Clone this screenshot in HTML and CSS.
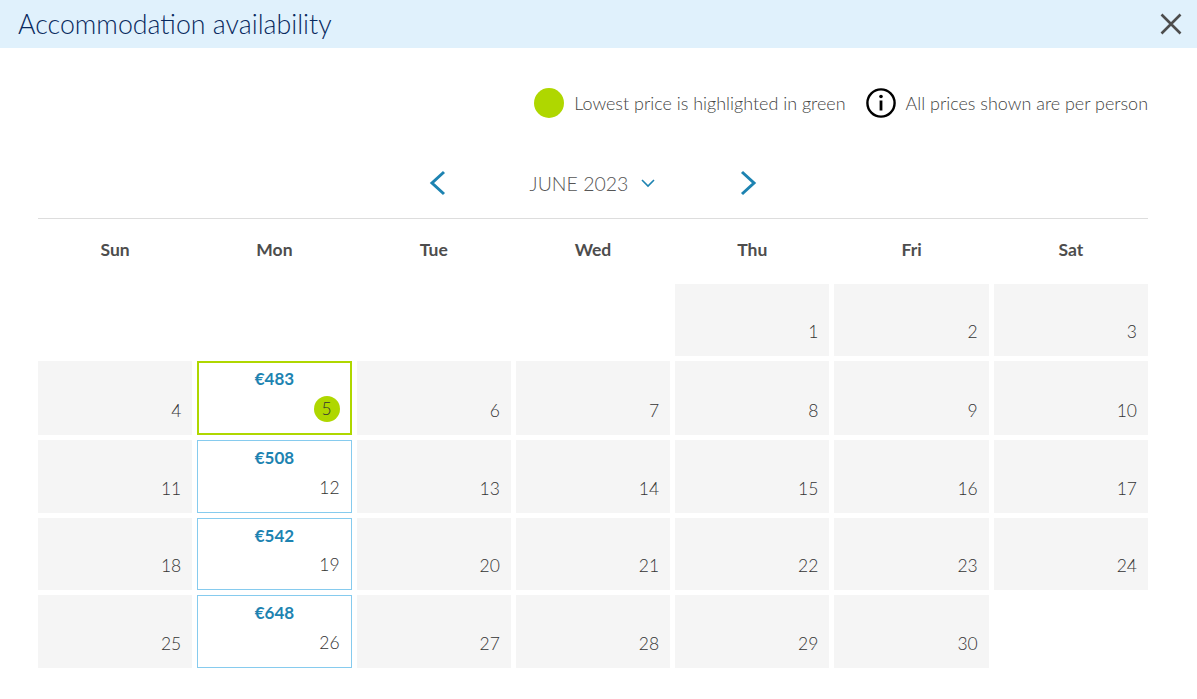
FILE: index.html
```html
<!DOCTYPE html>
<html lang="en">
<head>
<meta charset="utf-8">
<title>Accommodation availability</title>
<link rel="stylesheet" href="styles.css">
</head>
<body>
<header class="head">
  <h1 class="title">Accommodation availability</h1>
  <svg class="close" width="24" height="24" viewBox="0 0 24 24"><path d="M2.500 2.500L21.500 21.500M21.500 2.500L2.500 21.500" fill="none" stroke="#4d4d4d" stroke-width="2.600"/></svg>
</header>
<main class="body">
  <div class="legend">
    <span class="dot"></span>
    <span class="legend-text">Lowest price is highlighted in green</span>
    <svg class="info" width="30" height="30" viewBox="0 0 30 30"><circle cx="15" cy="15" r="13.600" fill="none" stroke="#000" stroke-width="2.400"/><circle cx="15" cy="8.500" r="1.800" fill="#000"/><path d="M15 12.500V22.500" fill="none" stroke="#000" stroke-width="2.800"/></svg>
    <span class="legend-text">All prices shown are per person</span>
  </div>
  <div class="month-nav">
    <svg class="arrow" width="18" height="26" viewBox="0 0 18 26"><path d="M15 2L3 13L15 24" fill="none" stroke="#1d83b1" stroke-width="3"/></svg>
    <div class="month"><span>JUNE 2023</span>
      <svg width="16" height="10" viewBox="0 0 16 10"><path d="M2 2L8 8L14 2" fill="none" stroke="#1d83b1" stroke-width="1.600"/></svg>
    </div>
    <svg class="arrow" width="18" height="26" viewBox="0 0 18 26"><path d="M3 2L15 13L3 24" fill="none" stroke="#1d83b1" stroke-width="3"/></svg>
  </div>
  <div class="weekdays">
    <div>Sun</div><div>Mon</div><div>Tue</div><div>Wed</div><div>Thu</div><div>Fri</div><div>Sat</div>
  </div>
  <div class="grid">
    <div></div><div></div><div></div><div></div>
    <div class="cell"><span class="num">1</span></div>
    <div class="cell"><span class="num">2</span></div>
    <div class="cell"><span class="num">3</span></div>
    <div class="cell"><span class="num">4</span></div>
    <div class="cell lowest"><span class="price">€483</span><span class="num">5</span></div>
    <div class="cell"><span class="num">6</span></div>
    <div class="cell"><span class="num">7</span></div>
    <div class="cell"><span class="num">8</span></div>
    <div class="cell"><span class="num">9</span></div>
    <div class="cell"><span class="num">10</span></div>
    <div class="cell"><span class="num">11</span></div>
    <div class="cell priced"><span class="price">€508</span><span class="num">12</span></div>
    <div class="cell"><span class="num">13</span></div>
    <div class="cell"><span class="num">14</span></div>
    <div class="cell"><span class="num">15</span></div>
    <div class="cell"><span class="num">16</span></div>
    <div class="cell"><span class="num">17</span></div>
    <div class="cell"><span class="num">18</span></div>
    <div class="cell priced"><span class="price">€542</span><span class="num">19</span></div>
    <div class="cell"><span class="num">20</span></div>
    <div class="cell"><span class="num">21</span></div>
    <div class="cell"><span class="num">22</span></div>
    <div class="cell"><span class="num">23</span></div>
    <div class="cell"><span class="num">24</span></div>
    <div class="cell"><span class="num">25</span></div>
    <div class="cell priced"><span class="price">€648</span><span class="num">26</span></div>
    <div class="cell"><span class="num">27</span></div>
    <div class="cell"><span class="num">28</span></div>
    <div class="cell"><span class="num">29</span></div>
    <div class="cell"><span class="num">30</span></div>
  </div>
</main>
</body>
</html>
```
FILE: styles.css
```css
* { box-sizing: border-box; }
html, body { margin: 0; height: 100%; overflow: hidden; }
body { background: #fff; font-family: "Lato", "Open Sans", sans-serif; color: #4d4d4d; }

.head {
  height: 48px;
  background: #e0f1fc;
  display: flex;
  align-items: center;
  justify-content: space-between;
  padding: 0 14px 0 18px;
}
.title { margin: 0; font-size: 26.750px; font-weight: 300; color: #092a5e; }

.body { padding: 0 49px 0 38px; }

.legend {
  height: 30px;
  margin-top: 40px;
  display: flex;
  align-items: center;
  justify-content: flex-end;
}
.dot { width: 30px; height: 30px; border-radius: 50%; background: #afd700; margin-right: 10px; }
.legend-text { font-size: 17.950px; font-weight: 300; color: #444; }
.info { margin: 0 10px 0 20px; }

.month-nav {
  height: 36px;
  margin-top: 47px;
  display: flex;
  align-items: center;
  justify-content: center;
}
.month {
  width: 292px;
  display: flex;
  align-items: center;
  justify-content: center;
  gap: 12px;
  font-size: 19.500px;
  font-weight: 300;
  color: #555;
}

.weekdays {
  margin-top: 17px;
  border-top: 1px solid #ddd;
  height: 66px;
  display: grid;
  grid-template-columns: repeat(7, 1fr);
  column-gap: 5px;
  align-items: center;
  text-align: center;
  font-size: 17.500px;
  font-weight: 700;
  padding-bottom: 4px;
}

.grid {
  display: grid;
  grid-template-columns: repeat(7, 1fr);
  grid-template-rows: 72px 74px 73px 72px 73px;
  gap: 5px;
}
.cell {
  background: #f5f5f5;
  position: relative;
  display: flex;
  flex-direction: column;
  align-items: center;
}
.num {
  position: absolute;
  right: 11px;
  bottom: 14px;
  font-size: 17.500px;
  line-height: 20px;
  font-weight: 300;
  color: #333;
}
.price {
  margin-top: 6px;
  font-size: 17px;
  line-height: 22px;
  font-weight: 700;
  color: #1d83b1;
}
.priced { background: #fff; border: 1px solid #86cbee; }
.priced .num { right: 11px; bottom: 14px; }
.lowest { background: #fff; border: 2px solid #afd700; }
.lowest .price { margin-top: 5px; }
.lowest .num {
  right: 10px;
  bottom: 11px;
  width: 26px;
  height: 26px;
  line-height: 26px;
  border-radius: 50%;
  background: #afd700;
  text-align: center;
}
```
